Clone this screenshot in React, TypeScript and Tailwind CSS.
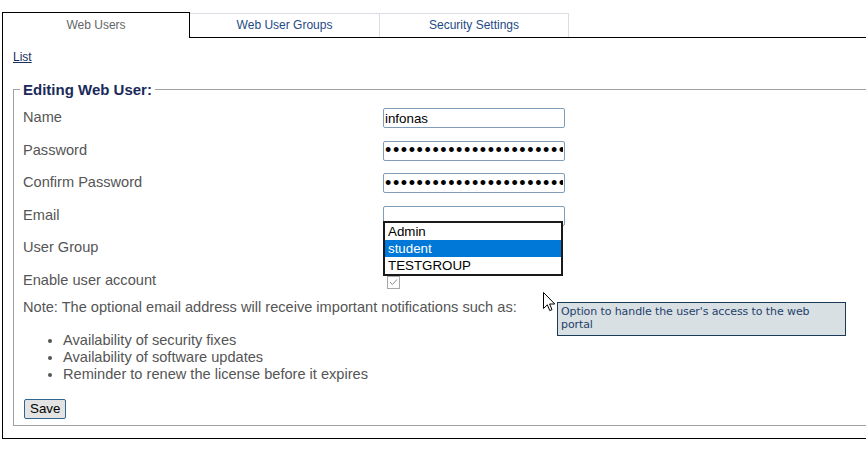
const labelCls = "w-[360px] shrink-0 text-[14.6px] text-[#555]";
const inputCls =
  "h-[20px] w-[182px] rounded-[2px] border border-[#7f9db9] bg-white px-[1px] text-[13.33px] text-black outline-none";

function Row({ label, h = "h-[32.5px]", children }: { label: string; h?: string; children?: React.ReactNode }) {
  return (
    <div className={`flex items-center ${h}`}>
      <span className={labelCls}>{label}</span>
      {children}
    </div>
  );
}

function Password() {
  return (
    <input
      type="password"
      readOnly
      value="abcdefghijklmnopqrstuvwxyz"
      className="h-[20px] w-[182px] rounded-[2px] border border-[#7f9db9] bg-white px-[1px] text-[18px] leading-none tracking-[1.6px] text-black outline-none"
    />
  );
}

export default function App() {
  return (
    <div className="relative h-[450px] w-[866px] overflow-hidden bg-white pl-[2px] font-['Liberation_Sans',Arial,sans-serif]">
      {/* tabs */}
      <div className="flex pt-[12px] text-[12px]">
        <div className="relative z-10 -mb-px flex h-[26px] w-[188px] items-center justify-center border border-b-0 border-black bg-white pb-[2px] text-[#666]">
          Web Users
        </div>
        <div className="mt-px flex h-[24px] w-[190px] items-center justify-center border-t border-r border-[#dcdce4] pb-[1px] text-[#1e4a85]">
          Web User Groups
        </div>
        <div className="mt-px flex h-[24px] w-[189px] items-center justify-center border-t border-r border-[#dcdce4] pb-[1px] text-[#1e4a85]">
          Security Settings
        </div>
      </div>

      {/* panel */}
      <div className="w-[900px] border-t border-l border-b border-black pl-[10px] pt-[12px] pb-[12px]">
        <div className="text-[12px] leading-[14px]">
          <a href="#" className="text-[#1a2d5c] underline">
            List
          </a>
        </div>
        <fieldset className="mt-[17px] border border-[#a0a0a0] pl-[9px] pb-[5px]">
          <legend className="-ml-[3px] px-[3px] text-[15px] leading-[17px] font-bold text-[#1a2a5a]">
            Editing Web User:
          </legend>
          <div className="mt-[4px]">
            <Row label="Name">
              <input readOnly value="infonas" className={inputCls} />
            </Row>
            <Row label="Password">
              <Password />
            </Row>
            <Row label="Confirm Password">
              <Password />
            </Row>
            <Row label="Email">
              <input readOnly value="" className={inputCls} />
            </Row>
            <Row label="User Group" />
            <Row label="Enable user account" h="h-[33px]">
              <span className="ml-[4px] mt-[2px] flex h-[13px] w-[13px] items-center justify-center border border-[#a8a8a8] bg-white">
                <svg width="9" height="8" viewBox="0 0 9 8">
                  <path d="M1 4.2 L3.4 6.5 L8 1.5" fill="none" stroke="#8a8a8a" strokeWidth="1" />
                </svg>
              </span>
            </Row>
          </div>
          <p className="mt-[1px] text-[14.6px] leading-[17px] text-[#555]">
            Note: The optional email address will receive important notifications such as:
          </p>
          <ul className="mt-[16px] list-disc pl-[40px] text-[14.6px] leading-[17px] text-[#555]">
            <li>Availability of security fixes</li>
            <li>Availability of software updates</li>
            <li>Reminder to renew the license before it expires</li>
          </ul>
          <button className="ml-[1px] mt-[16px] h-[20px] rounded-[2px] border border-[#2f6591] bg-[#e3e3e3] px-[5px] text-[13.33px] leading-none text-black">
            Save
          </button>
        </fieldset>
      </div>

      {/* open select list */}
      <div className="absolute left-[383px] top-[221px] w-[180px] border-2 border-[#1a1a1a] bg-white text-[13.33px] leading-[17px] text-black">
        <div className="pl-[3px]">Admin</div>
        <div className="bg-[#0078d7] pl-[3px] text-white">student</div>
        <div className="pl-[3px]">TESTGROUP</div>
      </div>

      {/* cursor */}
      <svg className="absolute left-[543px] top-[292px]" width="13" height="20" viewBox="0 0 13 20">
        <path
          d="M0.5 0.5 L0.5 16.5 L4.3 12.8 L6.8 18.6 L9 17.6 L6.6 12 L11.8 12 Z"
          fill="white"
          stroke="black"
          strokeWidth="1"
          strokeLinejoin="miter"
        />
      </svg>

      {/* tooltip */}
      <div className="absolute left-[557px] top-[302px] h-[34px] w-[289px] border border-[#1b3a57] bg-[#d8e0e4] px-[3px] pt-[2px] font-['DejaVu_Sans',sans-serif] text-[11px] leading-[13px] tracking-[-0.1px] text-[#1f3f6a]">
        Option to handle the user's access to the web
        <br />
        portal
      </div>
    </div>
  );
}
